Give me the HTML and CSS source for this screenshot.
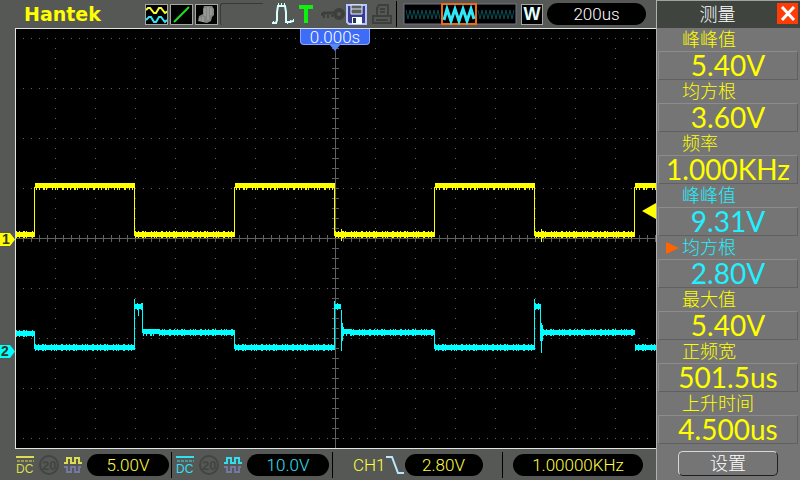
FILE: index.html
```html
<!DOCTYPE html>
<html lang="zh-CN">
<head>
<meta charset="utf-8">
<title>Hantek</title>
<link rel="stylesheet" href="styles.css">
</head>
<body>
<div class="device">
  <main class="screen">
    <header class="topbar">
      <div class="logo">Hantek</div>
      <div class="tiles">
        <svg class="tile" viewBox="0 0 23 21"><path d="M1 6l2-2h2l4 5h2l3-5h2l4 5 3-2" stroke="#ffff30" stroke-width="2"/><path d="M1 16l3-3h2l3 5h2l3-5h2l4 5 2-2" stroke="#30e8f8" stroke-width="2"/></svg>
        <svg class="tile" viewBox="0 0 23 21"><path d="M4 18L19 3" stroke="#20e020" stroke-width="2"/></svg>
        <svg class="tile" viewBox="0 0 23 21"><path d="M9 2h8l2 3v6l-2 2-1 4-4 2-5-1-4-1 1-5 4-2V5z" fill="#848484"/><path d="M10 4v8M13 3v13M16 4v7M8 13v5M5 14v3" stroke="#a8a8a8"/></svg>
      </div>
      <div class="slot"></div>
      <div class="status">
        <svg class="pulse" viewBox="0 0 22 22"><path d="M1.500 18v3M4.500 18v3M15.500 18v3M18.500 17v3M6.500 0v3M9.500 0v3M12.500 0v3M21.500 16v3" stroke="#d8ffff"/><path d="M0 20h4l1-3V9l1-6h7l1 6v10h4l3-1" stroke="#d8ffff" stroke-width="2"/></svg>
        <svg class="trig" viewBox="0 0 14 18"><path d="M0 2h14M7 2v16" stroke="#10f010" stroke-width="4"/></svg>
        <svg class="key" viewBox="0 0 24 14"><path d="M0 8l3-2h11" stroke="#3c3f3b" stroke-width="3"/><path d="M3 8v3M7 8v3M11 8v2" stroke="#3c3f3b" stroke-width="2"/><circle cx="18" cy="7" r="4" stroke="#3c3f3b" stroke-width="4"/></svg>
        <svg class="disk" viewBox="0 0 22 21"><path d="M1 1h19v19H3l-2-2z" fill="#3c3c8c" stroke="#b8c4ff" stroke-width="2"/><path d="M5 1h11v9H5z" fill="#5c605c" stroke="#e8f0ff"/><path d="M5 5h11" stroke="#d8e0ff"/><path d="M6 13h10v7H6z" fill="#f4ffff"/><path d="M7 14h3v5H7z" fill="#303060"/></svg>
        <svg class="printer" viewBox="0 0 22 21"><path d="M5 11V4l2-3h9v10M1 19v-7h18v7zM4 16h12M8 5h5M8 8h5" stroke="#3c3f3b" stroke-width="2"/></svg>
      </div>
      <div class="rule"></div>
      <svg class="memory" viewBox="0 0 114 22">
        <rect x="1" y="1" width="112" height="20" fill="#000" stroke="#707090"/>
        <path d="M3 7l2 9 2-9 2 9 2-9 2 9 2-9 2 9 2-9 2 9 2-9 2 9 2-9 2 9 2-9 2 9 2-9 2 9M75 7l2 9 2-9 2 9 2-9 2 9 2-9 2 9 2-9 2 9 2-9 2 9 2-9 2 9 2-9 2 9 2-9 2 9 2-9" stroke="#0c4c54"/>
        <rect x="39" y="1" width="34" height="20" fill="#000" stroke="#f06818" stroke-width="2"/>
        <path d="M41 17l3-11 4 12 4-12 4 12 4-12 4 12 4-12 3 10" stroke="#30e8f8" stroke-width="3"/>
      </svg>
      <div class="window">W</div>
      <div class="pill timebase">200us</div>
    </header>

    <section class="plotrow">
      <div class="gutter">
        <svg class="mark mark1" viewBox="0 0 15 15"><path d="M0 1h10l5 6.500-5 6.500H0z" fill="#ff0"/><text x="2" y="12">1</text></svg>
        <svg class="mark mark2" viewBox="0 0 15 15"><path d="M0 1h10l5 6.500-5 6.500H0z" fill="#0ff"/><text x="1" y="12">2</text></svg>
      </div>
      <div class="plot">
        <svg class="trace" viewBox="16 29 640 419" preserveAspectRatio="none">
          <g class="dots">
            <path stroke-dasharray="1 7" d="M23 38.500H655M23 88.500H655M23 138.500H655M23 188.500H655M23 288.500H655M23 338.500H655M23 388.500H655M23 438.500H655"/>
            <path stroke-dasharray="1 9" d="M55.500 48V448M95.500 48V448M135.500 48V448M175.500 48V448M215.500 48V448M255.500 48V448M295.500 48V448M375.500 48V448M415.500 48V448M455.500 48V448M495.500 48V448M535.500 48V448M575.500 48V448M615.500 48V448"/>
          </g>
          <path class="axis" d="M16 238.500H656M335.500 29V448"/>
          <path class="ticks" stroke-dasharray="1 7" d="M23 238.500H656"/>
          <path class="ticks" stroke-dasharray="1 9" d="M335.500 38V448"/>
          <g class="ch1">
            <path d="M34.500 236V187M134.500 184V236M234.500 236V187M334.500 184V236M434.500 236V187M534.500 184V236M634.500 236V187"/>
            <path class="band" d="M35 185.500H135M235 185.500H335M435 185.500H535M635 185.500H656M16 234.500H35M135 234.500H235M335 234.500H435M535 234.500H635"/>
            <path class="fuzz" d="M36 186.500H134M236 186.500H334M436 186.500H534M636 186.500H656M16 234.500H35M135 234.500H235M335 234.500H435M535 234.500H635"/>
            <path d="M341.500 229v12M541.500 229v13"/>
          </g>
          <g class="ch2">
            <path d="M34.500 332V349M134.500 349V299M142.500 304V333M138.500 307v9M234.500 332V349M334.500 349V301M341.500 310V351M342.500 323v18M343.500 327v8M434.500 332V349M534.500 349V299M540.500 304V341M541.500 323V353M542.500 325v16"/>
            <path class="band" d="M16 333.500H35M35 347.500H135M134 306.500H143M143 331.500H160M160 332.500H235M235 347.500H335M334 306.500H341M343 331.500H352M352 332.500H435M435 347.500H535M535 306.500H541M543 332.500H635M635 347.500H656"/>
            <path class="fuzz" d="M16 333.500H35M35 347.500H135M134 306.500H143M143 332.500H235M235 347.500H335M334 306.500H341M343 332.500H435M435 347.500H535M535 306.500H541M543 332.500H635M635 347.500H656"/>
          </g>
          <path d="M642 211l14-8v16z" fill="#ff0"/>
        </svg>
        <div class="tag">0.000s</div>
      </div>
    </section>

    <footer class="bottombar">
      <div class="channel yellow">
        <svg class="dc" viewBox="0 0 18 20"><path d="M0 2h18" stroke-width="2"/><path d="M1 6h17" stroke-dasharray="3 1"/><text x="0" y="18">DC</text></svg>
        <svg class="bw" viewBox="0 0 20 20"><circle cx="10" cy="10" r="9"/><text x="3" y="15">20</text></svg>
        <svg class="filter" viewBox="0 0 18 18"><path d="M0 7h3V2h4v5h4V2h4v5h3"/><path class="low" d="M0 11h3v5h4v-5h4v5h4v-5h2"/></svg>
        <div class="pill">5.00V</div>
      </div>
      <div class="channel cyan">
        <svg class="dc" viewBox="0 0 18 20"><path d="M0 2h18" stroke-width="2"/><path d="M1 6h17" stroke-dasharray="3 1"/><text x="0" y="18">DC</text></svg>
        <svg class="bw" viewBox="0 0 20 20"><circle cx="10" cy="10" r="9"/><text x="3" y="15">20</text></svg>
        <svg class="filter" viewBox="0 0 18 18"><path d="M0 7h3V2h4v5h4V2h4v5h3"/><path class="low" d="M0 11h3v5h4v-5h4v5h4v-5h2"/></svg>
        <div class="pill">10.0V</div>
      </div>
      <div class="trigger yellow">
        <span>CH1</span>
        <svg class="slope" viewBox="0 0 18 20"><path d="M0 2h6l6 16h6" stroke="#b8e8ff" stroke-width="2"/></svg>
        <div class="pill">2.80V</div>
      </div>
      <div class="counter yellow"><div class="pill">1.00000KHz</div></div>
    </footer>
  </main>

  <aside class="panel">
    <div class="title"><h1>测量</h1><button class="close" aria-label="关闭"><svg viewBox="0 0 21 21"><path d="M5 4l12 13M17 4L5 17" stroke="#fff" stroke-width="3"/></svg></button></div>
    <dl class="measures">
      <dt>峰峰值</dt><dd>5.40V</dd>
      <dt>均方根</dt><dd>3.60V</dd>
      <dt>频率</dt><dd>1.000KHz</dd>
      <dt class="cyan">峰峰值</dt><dd class="cyan">9.31V</dd>
      <dt class="cyan current">均方根</dt><dd class="cyan">2.80V</dd>
      <dt>最大值</dt><dd>5.40V</dd>
      <dt>正频宽</dt><dd>501.5us</dd>
      <dt>上升时间</dt><dd>4.500us</dd>
    </dl>
    <button class="settings">设置</button>
  </aside>
</div>
</body>
</html>
```
FILE: styles.css
```css
* { box-sizing: border-box; margin: 0; }
body { background: #555855; font-family: Roboto, "Liberation Sans", "Noto Sans CJK SC", sans-serif; font-size: 17px; font-weight: 300; color: #fff; }
svg { display: block; fill: none; flex: none; }
button { padding: 0; font: inherit; color: inherit; }
.device { display: grid; grid-template-columns: 1fr 144px; min-height: 100vh; }
.screen { display: grid; grid-template-rows: 28px 1fr 31px; min-width: 0; }
.yellow { color: #ffff40; }
.cyan { color: #30e0f0; }

.topbar { display: flex; align-items: center; padding-right: 10px; }
.logo { width: 121px; margin-left: 24px; color: #ff0; font: bold 19px/28px "DejaVu Sans", sans-serif; }
.tiles { display: flex; gap: 2px; }
.tile { width: 23px; height: 21px; background: #000; outline: 1px solid #a4a8a4; outline-offset: -1px; }
.slot { width: 43px; height: 22px; margin: 0 9px 0 2px; border: 1px solid #383a38; border-width: 1px 0 0 1px; border-radius: 3px 0 0 3px; }
.status { display: flex; align-items: center; }
.pulse { width: 22px; height: 22px; margin-right: 5px; }
.trig { width: 14px; height: 18px; margin-right: 8px; }
.key { width: 24px; height: 14px; margin-right: 1px; }
.disk { width: 22px; height: 21px; margin-right: 4px; }
.printer { width: 22px; height: 21px; }
.rule { width: 1px; height: 26px; margin: 0 6px 0 2px; background: #000; }
.memory { width: 114px; height: 22px; margin-right: 4px; }
.window { width: 22px; height: 21px; margin-right: 4px; background: #000; border: 1px solid #a4a8a4; color: #e0ffff; font: bold 18px/19px "Liberation Sans", sans-serif; display: flex; justify-content: center; }
.pill { height: 22px; border-radius: 11px; background: #000; text-align: center; line-height: 23px; }
.timebase { flex: 1; }

.plotrow { display: grid; grid-template-columns: 15px 1fr; min-height: 0; }
.gutter { position: relative; }
.mark { position: absolute; left: 0; width: 15px; height: 15px; }
.mark text { font: bold 14px "Liberation Sans", sans-serif; fill: #343820; }
.mark1 { top: 204px; }
.mark2 { top: 316px; }
.plot { position: relative; background: #000; border: solid #e0e4e0; border-width: 1px 0 1px 1px; }
.trace { width: 100%; height: 100%; }
.dots { stroke: #646464; }
.axis { stroke: #606060; }
.ticks { stroke: #606060; stroke-width: 7px; }
.ch1 { stroke: #ff0; }
.ch2 { stroke: #0ff; }
.band { stroke-width: 5px; }
.fuzz { stroke-width: 7px; stroke-dasharray: 1 2 1 3 2 1 1 5 1 2 1 1 1 4 2 3; }
.tag { position: absolute; top: 0; left: 50%; width: 70px; height: 16px; margin-left: -36px; background: #3c6cf8; border: solid #88a8ff; border-width: 0 1px 1px; border-radius: 0 0 4px 4px; text-align: center; line-height: 17px; }
.tag::after { content: ""; position: absolute; left: 28px; top: 15px; border: solid transparent; border-width: 7px 6px 0; border-top-color: #5888f8; }

.bottombar { display: flex; align-items: center; }
.channel { display: flex; align-items: center; height: 26px; }
.channel:first-child { width: 156px; margin-left: 16px; border-right: 1px solid #000; }
.channel + .channel { width: 157px; margin-left: 4px; border-right: 1px solid #000; }
.channel .pill { width: 82px; }
.dc { width: 18px; height: 20px; margin-right: 5px; stroke: currentColor; }
.dc text { font: 12px "Liberation Sans", sans-serif; fill: currentColor; stroke: none; }
.yellow .dc, .yellow .filter { color: #dcdc50; }
.bw { width: 20px; height: 20px; margin-right: 5px; stroke: #424542; stroke-width: 2px; }
.bw text { font: bold 13px "Liberation Sans", sans-serif; fill: #424542; stroke: none; }
.filter { width: 18px; height: 18px; margin-right: 5px; stroke: currentColor; stroke-width: 2px; }
.low { stroke: #7478a0; }
.trigger { display: flex; align-items: center; width: 170px; height: 26px; padding-left: 20px; border-right: 1px solid #000; }
.slope { width: 18px; height: 20px; margin-right: 1px; }
.trigger .pill { width: 78px; }
.counter { flex: 1; padding: 0 13px 0 10px; }

.panel { display: flex; flex-direction: column; background: #757575; border-left: 1px solid #b0b0b0; font-family: "Liberation Sans", "Noto Sans CJK SC", sans-serif; }
.title { position: relative; height: 28px; background: #40443f; border-top: 1px solid #a0a4a0; }
.title h1 { padding-right: 22px; font-size: 18px; font-weight: 300; line-height: 29px; text-align: center; }
.close { position: absolute; right: 2px; top: 2px; width: 21px; height: 21px; border: 0; background: #ff3c08; }
.measures { color: #ff0; }
.measures dt { position: relative; height: 23px; padding-left: 25px; font-size: 18px; line-height: 25px; }
.measures dd { height: 29px; margin: 0 2px 0 1px; border: 1px solid; border-color: #8c8c8c #606060 #606060 #8c8c8c; font: 400 28px/27px Lato, sans-serif; text-align: center; }
.measures .cyan { color: #20f0ff; }
.current::before { content: ""; position: absolute; left: 9px; top: 6px; border: solid transparent; border-width: 6px 0 6px 13px; border-left-color: #ff6400; }
.settings { width: 100px; height: 25px; margin: 7px 0 4px 21px; background: none; border: 1px solid; border-color: #d8d8d8 #202020 #202020 #d8d8d8; border-radius: 5px; font-size: 18px; line-height: 25px; }
```
